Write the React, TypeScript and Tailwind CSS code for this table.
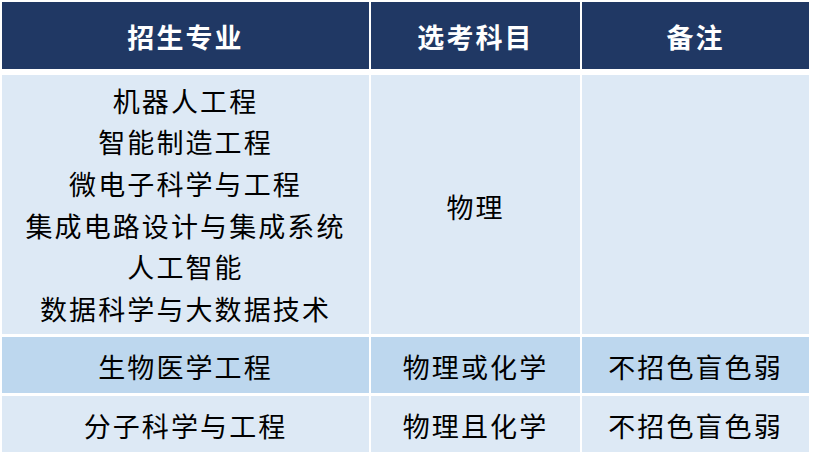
export default function App() {
  const font = { fontFamily: '"Noto Sans CJK SC", "Noto Sans", sans-serif' }

  const majors = [
    "机器人工程",
    "智能制造工程",
    "微电子科学与工程",
    "集成电路设计与集成系统",
    "人工智能",
    "数据科学与大数据技术",
  ]

  const rows = [
    { major: "生物医学工程", subject: "物理或化学", note: "不招色盲色弱", bg: "bg-[#bdd7ee]" },
    { major: "分子科学与工程", subject: "物理且化学", note: "不招色盲色弱", bg: "bg-[#dde9f5]" },
  ]

  return (
    <div className="w-[815px] h-[463px] bg-white pt-[2px] pl-[2px]" style={font}>
      <div className="w-[807px] flex flex-col text-[27px] tracking-[2.1px]">
        {/* Header */}
        <div className="flex gap-[2px] h-[67px] font-bold text-white">
          <div className="w-[367px] bg-[#203864] flex items-center justify-center pt-[3px]">招生专业</div>
          <div className="w-[209px] bg-[#203864] flex items-center justify-center pt-[3px]">选考科目</div>
          <div className="w-[227px] bg-[#203864] flex items-center justify-center pt-[3px]">备注</div>
        </div>

        {/* Body */}
        <div className="mt-[6px] flex flex-col gap-[3px] text-black">
          <div className="flex gap-[2px] h-[259px]">
            <div className="w-[367px] bg-[#dde9f5] flex flex-col items-center justify-center leading-[41.6px]">
              {majors.map((m) => (
                <div key={m}>{m}</div>
              ))}
            </div>
            <div className="w-[209px] bg-[#dde9f5] flex items-center justify-center pt-[6px]">物理</div>
            <div className="w-[227px] bg-[#dde9f5]"></div>
          </div>
          {rows.map((r) => (
            <div key={r.major} className="flex gap-[2px] h-[56px]">
              <div className={`w-[367px] ${r.bg} flex items-center justify-center pt-[5px]`}>{r.major}</div>
              <div className={`w-[209px] ${r.bg} flex items-center justify-center pt-[5px]`}>{r.subject}</div>
              <div className={`w-[227px] ${r.bg} flex items-center justify-center pt-[5px]`}>{r.note}</div>
            </div>
          ))}
        </div>
      </div>
    </div>
  )
}
